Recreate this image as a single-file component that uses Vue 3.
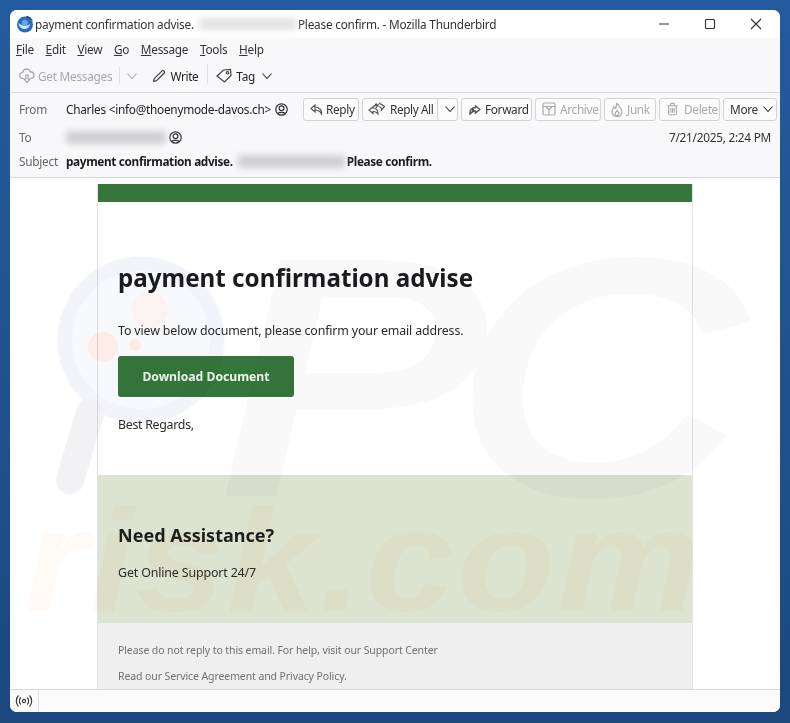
<script setup>
const menus = [
  { u: 'F', post: 'ile' },
  { u: 'E', post: 'dit' },
  { u: 'V', post: 'iew' },
  { u: 'G', post: 'o' },
  { u: 'M', post: 'essage' },
  { u: 'T', post: 'ools' },
  { u: 'H', post: 'elp' },
]
</script>

<template>
  <div class="desktop">
    <div class="window">
      <div class="titlebar">
        <svg class="logo" width="18" height="18" viewBox="0 0 18 18">
          <circle cx="9" cy="9.500" r="8" fill="#2a6cc0" />
          <path d="M10 1c3.500-.3 6.500 2.300 7 5.500-1.500-2-3.500-3-5.500-2.800z" fill="#1d55a8" />
          <path d="M2.500 8c0 3.800 3 6.300 6.500 6 3-.3 5-2.700 5-5.500-.7 1.300-2 2-3.500 2-3 .3-5.500-.5-8-2.500z" fill="#cfe2f7" />
          <circle cx="8.800" cy="7.800" r="3" fill="#6fa5e4" />
        </svg>
        <span class="title">payment confirmation advise.</span>
        <span class="blur title-blur"></span>
        <span class="title">Please confirm. - Mozilla Thunderbird</span>
        <div class="winctl">
          <svg width="12" height="12" viewBox="0 0 12 12"><path d="M1 6h10" stroke="#333" stroke-width="1.200" /></svg>
          <svg width="12" height="12" viewBox="0 0 12 12"><rect x="1.500" y="1.500" width="9" height="9" rx="1" fill="none" stroke="#333" stroke-width="1.200" /></svg>
          <svg width="12" height="12" viewBox="0 0 12 12"><path d="M1 1l10 10M11 1L1 11" stroke="#333" stroke-width="1.200" /></svg>
        </div>
      </div>

      <div class="menubar">
        <span v-for="m in menus" :key="m.u"><u>{{ m.u }}</u>{{ m.post }}</span>
      </div>

      <div class="toolbar">
        <div class="tool disabled">
          <svg width="16" height="16" viewBox="0 0 16 16" fill="none" stroke="#a4a4a4" stroke-width="1.200"><path d="M5 10.500H4a3 3 0 0 1-.4-6A4 4 0 0 1 11.400 4a3.200 3.200 0 0 1 .6 6.500h-1" /><path d="M6.800 7v4H5.200L8 14.500l2.800-3.500H9.200V7z" /></svg>
          <span>Get Messages</span>
        </div>
        <span class="tsep"></span>
        <svg class="tchev" width="12" height="12" viewBox="0 0 12 12"><path d="M1.500 3.500L6 8.500l4.500-5" fill="none" stroke="#aaa" stroke-width="1.100" /></svg>
        <div class="tool write">
          <svg width="14" height="14" viewBox="0 0 14 14" fill="none" stroke="#444" stroke-width="1.200"><path d="M1.500 12.500l.8-3L10 1.800a1.200 1.200 0 0 1 1.700 0l.5.500a1.200 1.200 0 0 1 0 1.700L4.500 11.700z" /></svg>
          <span>Write</span>
        </div>
        <span class="tsep tall"></span>
        <div class="tool tag">
          <svg width="16" height="15" viewBox="0 0 16 15" fill="none" stroke="#444" stroke-width="1.200"><path d="M1 8l6.500-6 7-.5.500 6-6.500 6.500z" /><circle cx="11.500" cy="4.700" r="1.200" /></svg>
          <span>Tag</span>
          <svg width="12" height="12" viewBox="0 0 12 12"><path d="M1.500 3.500L6 8.500l4.500-5" fill="none" stroke="#333" stroke-width="1.100" /></svg>
        </div>
      </div>

      <div class="header">
        <div class="hrow from">
          <span class="lbl">From</span>
          <span class="val">Charles &lt;info@thoenymode-davos.ch&gt;</span>
          <svg class="person" width="13" height="13" viewBox="0 0 13 13" fill="none" stroke="#333" stroke-width="1.200"><circle cx="6.500" cy="6.500" r="5.700" /><circle cx="6.500" cy="5.200" r="2.400" /><path d="M2.800 10.500c1-1.600 6.400-1.600 7.400 0" /></svg>
          <div class="actions">
            <div class="btn b-reply">
              <svg width="13" height="13" viewBox="0 0 13 13" fill="none" stroke="#555" stroke-width="1.200"><path d="M5 2L1 5.500 5 9V7c3 0 5 1 6.500 4 .5-4-2.500-7-6.500-7z" /><path d="M5 4v3" stroke-width="1" /></svg>
              <span>Reply</span>
            </div>
            <div class="btn b-all">
              <svg width="18" height="14" viewBox="0 0 18 14" fill="none" stroke="#555" stroke-width="1.200"><path d="M5 5L1 8l4 3.500V9.500c2.500 0 4 .8 5 2.500.5-3.500-2-6-5-6z" /><path d="M8.500 2L5 5M8 6c.5-2 1.500-3 3-3.500M11 1l5.500 3.500-3 3.500c.3-2-1-3.300-3-3.500" /><circle cx="8.500" cy="3" r="1" /></svg>
              <span class="all-text">Reply All</span>
              <i class="divider"></i>
              <svg width="12" height="12" viewBox="0 0 12 12"><path d="M1.500 3.500L6 8.500l4.500-5" fill="none" stroke="#333" stroke-width="1.100" /></svg>
            </div>
            <div class="btn b-fwd">
              <svg width="13" height="13" viewBox="0 0 13 13" fill="none" stroke="#555" stroke-width="1.400"><path d="M7.500 3l4.500 3.500L7.500 10V8C5 8 3.500 9 2 11c-.7-4 2-6.500 5.500-6.500z" /><circle cx="5" cy="7" r=".6" /></svg>
              <span>Forward</span>
            </div>
            <div class="btn off b-arch">
              <svg width="14" height="14" viewBox="0 0 14 14" fill="none" stroke="#aaa" stroke-width="1.200"><rect x="1" y="1" width="12" height="12" rx="1.500" /><path d="M1 4.500h12M4 4.500L7 8l3-3.500M7 8v5" /></svg>
              <span>Archive</span>
            </div>
            <div class="btn off b-junk">
              <svg width="12" height="15" viewBox="0 0 12 15" fill="none" stroke="#aaa" stroke-width="1.200"><path d="M6 1c.5 2.500 5 4.500 5 9a5 4.500 0 0 1-10 0c0-2 1-3.500 2-5 .5 1 1 1.500 1.500 1.500C5 5 5.500 3 6 1z" /><path d="M6 13.500c-1.500 0-2.200-1.300-1.800-2.500.4-.8 1.300-1.300 1.800-2.500.8 1.200 2 2 1.800 3.200-.2 1.100-1 1.800-1.800 1.800z" /></svg>
              <span>Junk</span>
            </div>
            <div class="btn off b-del">
              <svg width="13" height="14" viewBox="0 0 14 14" fill="none" stroke="#aaa" stroke-width="1.200"><path d="M1.500 3.500h11M5 3.500V2a1 1 0 0 1 1-1h2a1 1 0 0 1 1 1v1.500M2.800 3.500v8.700a1 1 0 0 0 1 1h6.400a1 1 0 0 0 1-1V3.500M5.200 6v5M7 6v5M8.800 6v5" /></svg>
              <span>Delete</span>
            </div>
            <div class="btn b-more">
              <span>More</span>
              <svg width="12" height="12" viewBox="0 0 12 12"><path d="M1.500 3.500L6 8.500l4.500-5" fill="none" stroke="#333" stroke-width="1.100" /></svg>
            </div>
          </div>
        </div>
        <div class="hrow to">
          <span class="lbl">To</span>
          <span class="blur to-blur"></span>
          <svg class="person to-person" width="13" height="13" viewBox="0 0 13 13" fill="none" stroke="#333" stroke-width="1.200"><circle cx="6.500" cy="6.500" r="5.700" /><circle cx="6.500" cy="5.200" r="2.400" /><path d="M2.800 10.500c1-1.600 6.400-1.600 7.400 0" /></svg>
          <span class="date">7/21/2025, 2:24 PM</span>
        </div>
        <div class="hrow subject">
          <span class="lbl">Subject</span>
          <b>payment confirmation advise.</b>
          <span class="blur sub-blur"></span>
          <b>Please confirm.</b>
        </div>
      </div>

      <div class="body">
        <div class="card">
          <div class="stripe"></div>
          <div class="main">
            <h1>payment confirmation advise</h1>
            <p class="lead">To view below document, please confirm your email address.</p>
            <div class="cta">Download Document</div>
            <p class="regards">Best Regards,</p>
          </div>
          <div class="assist">
            <h2>Need Assistance?</h2>
            <p>Get Online Support 24/7</p>
          </div>
          <div class="foot">
            <p>Please do not reply to this email. For help, visit our Support Center</p>
            <p>Read our Service Agreement and Privacy Policy.</p>
          </div>
        </div>
      </div>

      <div class="status">
        <div class="signal">
          <svg width="18" height="14" viewBox="0 0 18 14" fill="none" stroke="#333" stroke-width="1.100"><circle cx="9" cy="7" r="1.600" /><path d="M5.800 3.500a5 5 0 0 0 0 7M12.200 3.500a5 5 0 0 1 0 7M3.500 1.500a8 8 0 0 0 0 11M14.500 1.500a8 8 0 0 1 0 11" /></svg>
        </div>
      </div>
    </div>

    <div class="wm" aria-hidden="true">
      <svg class="wm-glass" width="180" height="240" viewBox="0 0 180 240">
        <circle cx="86" cy="84" r="84" fill="#e6edf8" fill-opacity=".32" />
        <circle cx="86" cy="84" r="76" fill="none" stroke="#ececf0" stroke-opacity=".35" stroke-width="14" />
        <circle cx="95" cy="54" r="18" fill="#fdeee6" fill-opacity=".5" />
        <circle cx="48" cy="91" r="15" fill="#fde6dc" fill-opacity=".7" />
        <circle cx="80" cy="89" r="6" fill="#fde6dc" fill-opacity=".7" />
        <path d="M35 157L15 224" stroke="#efeff1" stroke-opacity=".8" stroke-width="28" stroke-linecap="round" />
      </svg>
      <span class="wm-pc">PC</span>
      <span class="wm-risk">risk.com</span>
    </div>
  </div>
</template>

<style>
html, body { margin: 0; padding: 0; }
</style>

<style scoped>
.desktop {
  position: relative;
  width: 790px;
  height: 723px;
  box-sizing: border-box;
  padding: 10px 10px 11px;
  overflow: hidden;
  background: linear-gradient(#245b9e, #1b497f);
  font-family: "Noto Sans", "Open Sans", sans-serif;
  font-size: 11.8px;
  letter-spacing: -.25px;
  color: #222;
}
.window {
  display: flex;
  flex-direction: column;
  height: 100%;
  background: #fff;
  border-radius: 7px;
  overflow: hidden;
}
.blur {
  display: inline-block;
  background: #cfcfd3;
  filter: blur(3px);
  border-radius: 3px;
}
.titlebar {
  display: flex;
  align-items: center;
  height: 28px;
  flex: none;
  padding-left: 6px;
  background: #fff;
  color: #333;
  letter-spacing: -.22px;
}
.logo { margin-right: 1px; }
.title-blur { width: 98px; height: 12px; margin: 0 1px 0 5px; background: #e2e2e4; }
.winctl {
  display: flex;
  gap: 34px;
  margin-left: auto;
  margin-right: 18px;
}
.menubar {
  display: flex;
  gap: 11.7px;
  height: 21px;
  flex: none;
  align-items: center;
  padding-left: 6px;
  background: #f8f8fa;
  color: #333;
}
.toolbar {
  display: flex;
  align-items: center;
  height: 33px;
  flex: none;
  padding-left: 9px;
  background: #f8f8fa;
  border-bottom: 1px solid #d8d8da;
}
.tool { display: flex; align-items: center; gap: 3px; }
.disabled { color: #a8a8a8; }
.tsep { width: 1px; height: 17px; background: #e0e0e0; margin: 0 6px 0 7px; }
.tsep.tall { height: 20px; margin: -4px 8px 0 9px; }
.tchev { margin-right: 14px; }
.write { gap: 4px; letter-spacing: -.35px; }
.tag { gap: 4px; }
.tag svg:last-child { margin-left: 2px; }
.header {
  flex: none;
  height: 85px;
  box-sizing: border-box;
  padding: 4px 3px 0 9px;
  background: #f8f8fa;
  border-bottom: 1px solid #d8d8da;
}
.hrow { display: flex; align-items: center; white-space: nowrap; }
.from { height: 24px; }
.to { height: 26px; margin-top: 3px; }
.subject { height: 20px; margin-top: 1px; }
.lbl { width: 47px; color: #666; flex: none; }
.person { margin-left: 4px; flex: none; }
.to-person { margin-left: 3px; }
.actions { display: flex; gap: 3px; margin-left: auto; }
.btn {
  display: flex;
  align-items: center;
  gap: 4px;
  box-sizing: border-box;
  height: 23px;
  padding-left: 6px;
  border: 1px solid #d3d3d6;
  border-radius: 3px;
  background: #fbfbfc;
  color: #333;
  white-space: nowrap;
  letter-spacing: -.32px;
}
.btn.off { color: #a8a8a8; }
.b-reply { width: 56px; gap: 3px; }
.b-all { width: 96px; gap: 4px; padding-left: 5px; }
.all-text { letter-spacing: -.4px; }
.b-fwd { width: 71px; gap: 4px; }
.b-arch { width: 66px; }
.b-junk { width: 52px; }
.b-del { width: 61px; gap: 5px; }
.b-more { width: 54px; gap: 4px; padding-left: 6px; }
.divider { width: 1px; height: 21px; background: #d3d3d6; margin: 0 2px 0 0; }
.to-blur { width: 100px; height: 13px; }
.date { margin-left: auto; padding-right: 6px; color: #333; }
.sub-blur { width: 107px; height: 13px; margin: 0 2px 0 5px; }
.subject b { font-weight: 700; color: #1c1c1c; letter-spacing: -.35px; }
.body {
  flex: 1;
  min-height: 0;
  overflow: hidden;
  background: #fff;
  padding-top: 6px;
}
.card {
  width: 596px;
  box-sizing: border-box;
  margin-left: 87px;
  border-left: 1px solid #e2e2e4;
  border-right: 1px solid #e2e2e4;
}
.stripe { height: 18px; background: #35773b; }
.main {
  height: 273px;
  box-sizing: border-box;
  padding: 58px 20px 0;
  color: #2a2a2a;
}
h1 {
  margin: 0;
  font-size: 24.2px;
  line-height: 36px;
  font-weight: 700;
  letter-spacing: 0;
  color: #1b1b1f;
}
.lead { margin: 25px 0 0; font-size: 12.4px; letter-spacing: -.14px; line-height: 20px; }
.cta {
  display: flex;
  align-items: center;
  justify-content: center;
  width: 176px;
  height: 41px;
  margin-top: 15px;
  border-radius: 3px;
  background: #35773b;
  color: #f2f6f0;
  font-size: 12.2px;
  letter-spacing: 0;
  font-weight: 700;
}
.regards { margin: 18px 0 0; font-size: 12.4px; letter-spacing: -.3px; line-height: 20px; }
.assist {
  height: 148px;
  box-sizing: border-box;
  padding: 43px 20px 0;
  background: #dce3d0;
}
h2 {
  margin: 0;
  font-size: 18px;
  line-height: 34px;
  font-weight: 700;
  letter-spacing: 0;
  color: #1e1e1c;
}
.assist p { margin: 11px 0 0; font-size: 12.4px; letter-spacing: -.14px; line-height: 20px; color: #2c2c2a; }
.foot {
  height: 90px;
  box-sizing: border-box;
  padding: 19px 20px 0;
  background: #efefef;
  color: #717171;
  font-size: 10.5px;
  letter-spacing: -.1px;
}
.foot p { margin: 0 0 10px; line-height: 16px; }
.status {
  flex: none;
  display: flex;
  height: 23px;
  box-sizing: border-box;
  background: #fbfbfc;
  border-top: 1px solid #d8d8da;
}
.signal {
  display: flex;
  align-items: center;
  justify-content: center;
  width: 28px;
  border-right: 1px solid #e2e2e4;
}
.wm {
  position: absolute;
  left: 10px;
  right: 10px;
  top: 178px;
  height: 511px;
  overflow: hidden;
  pointer-events: none;
  mix-blend-mode: multiply;
}
.wm-glass { position: absolute; left: 45px; top: 78px; }
.wm-pc {
  position: absolute;
  left: 212px;
  top: 0;
  font-family: "Liberation Sans", sans-serif;
  font-style: italic;
  font-weight: 400;
  font-size: 325px;
  line-height: 400px;
  letter-spacing: -20px;
  color: #3c3c46;
  -webkit-text-stroke: 12px #3c3c46;
  opacity: .028;
  transform: scaleX(1.2);
  transform-origin: left top;
}
.wm-risk {
  position: absolute;
  left: 14px;
  top: 303px;
  font-family: "Liberation Sans", sans-serif;
  font-style: italic;
  font-weight: 700;
  font-size: 146px;
  line-height: 160px;
  letter-spacing: 2px;
  color: #f0a050;
  opacity: .05;
  transform: scaleX(1.1);
  transform-origin: left top;
}
</style>
